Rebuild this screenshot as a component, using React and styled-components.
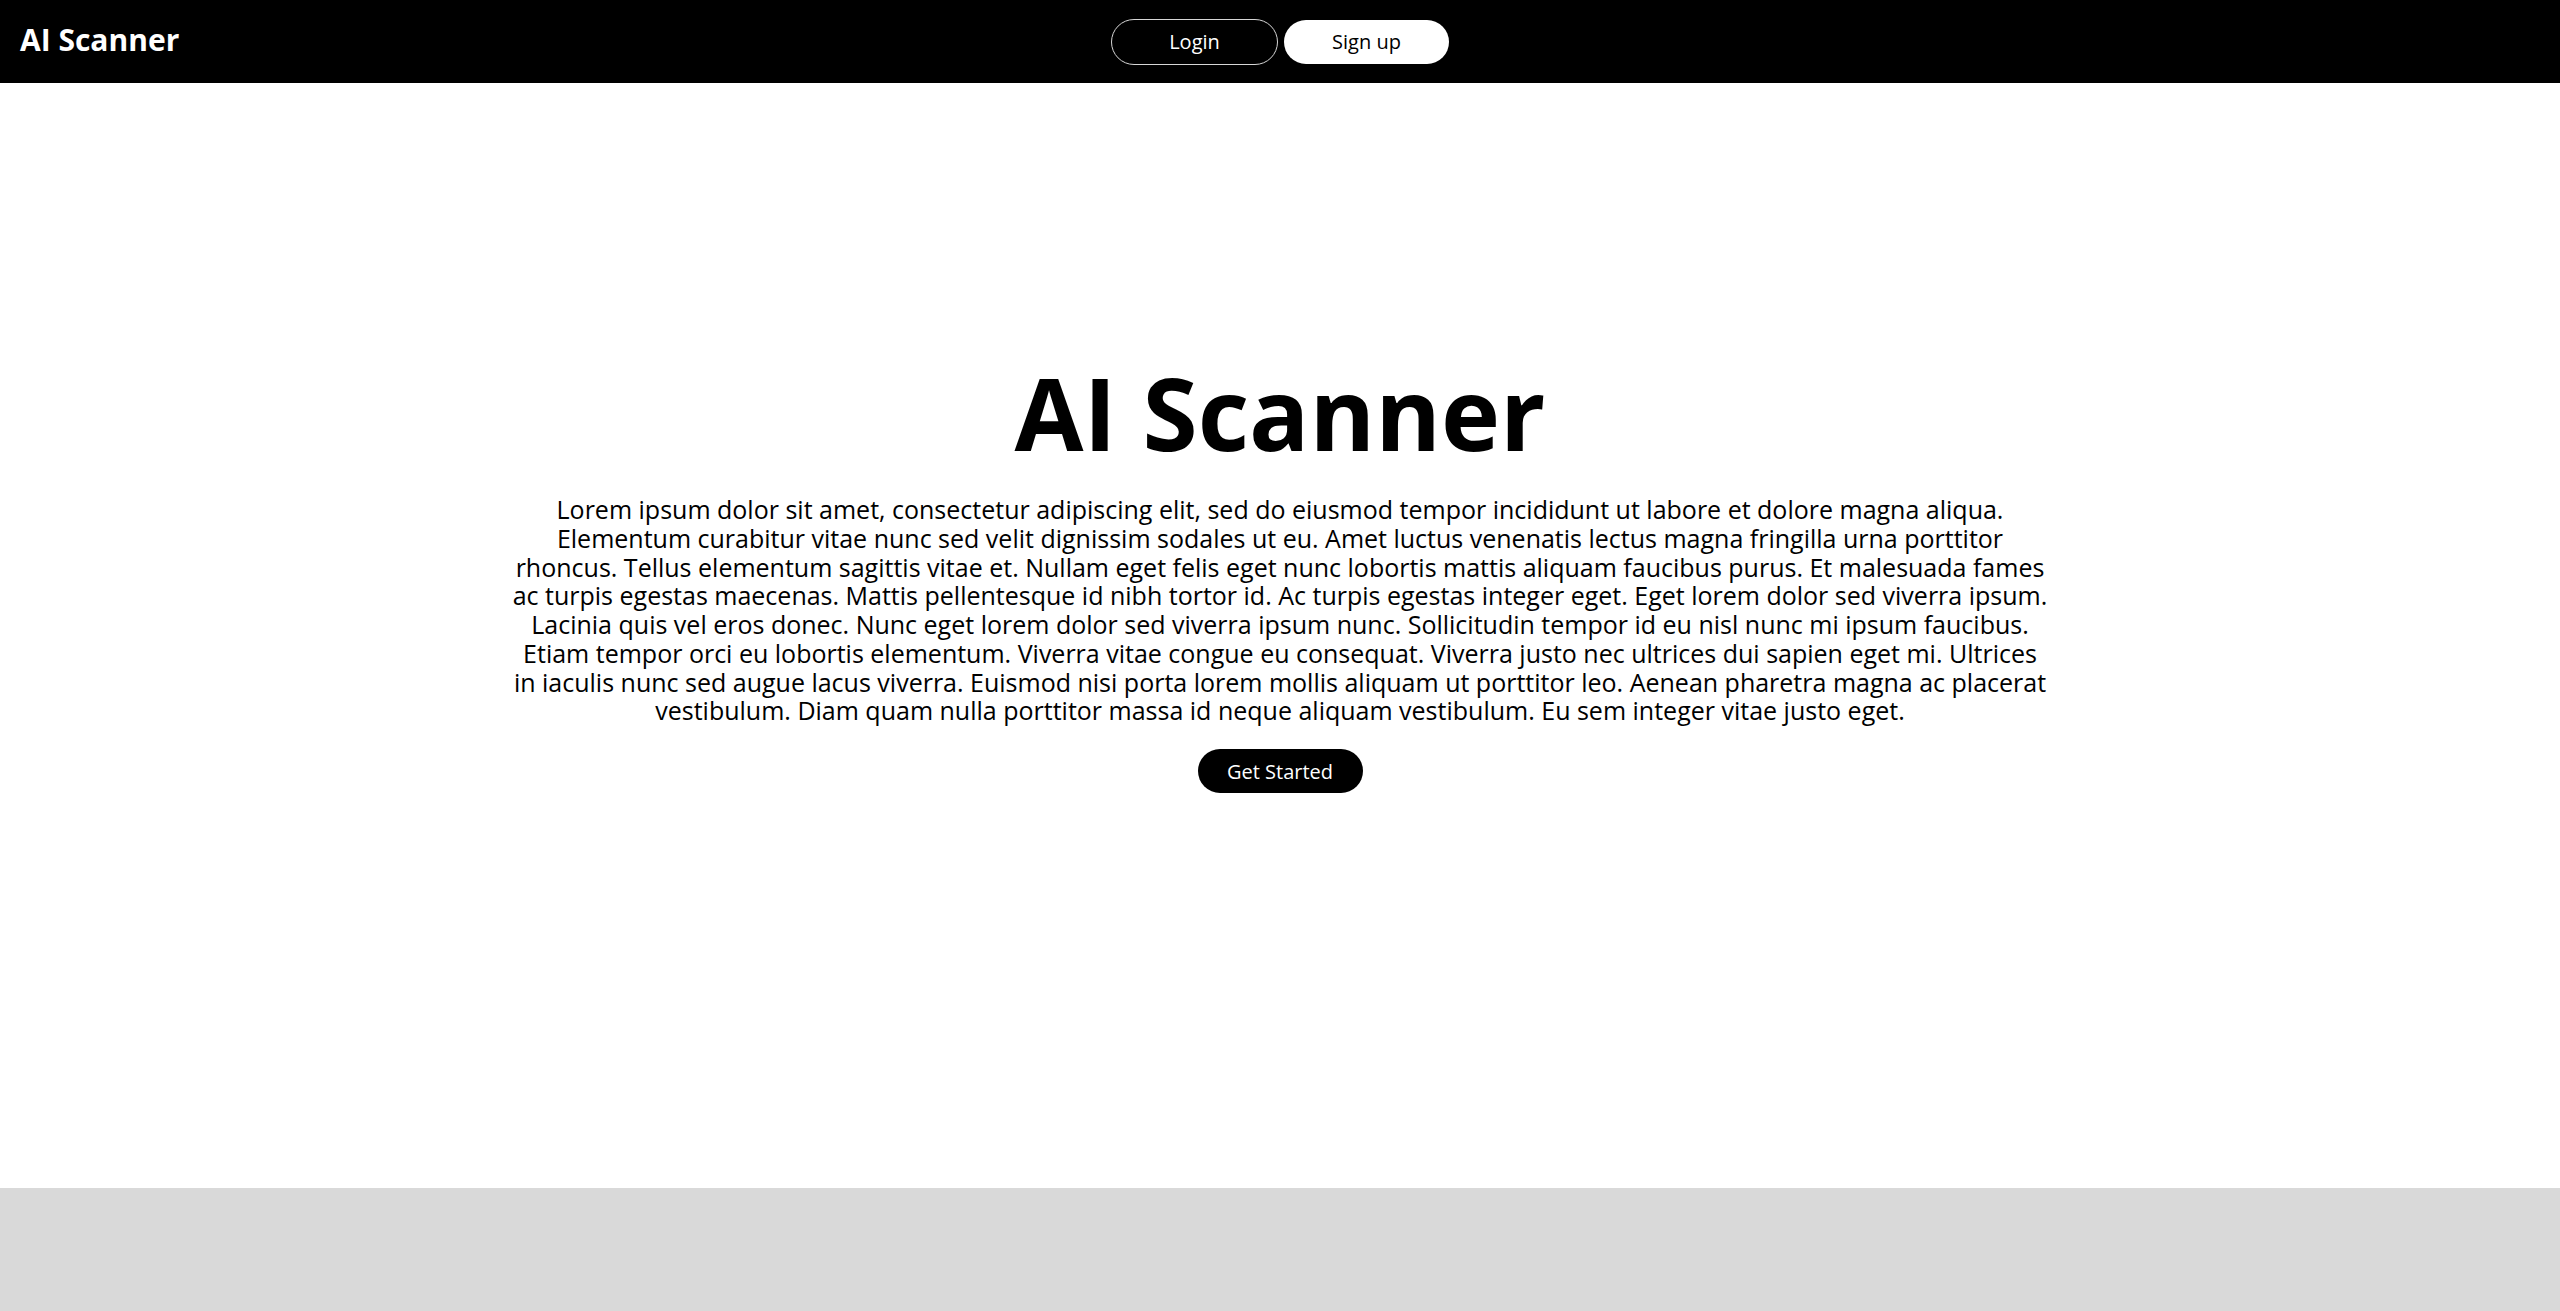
import React from "react";
import styled, { createGlobalStyle } from "styled-components";

const GlobalStyle = createGlobalStyle`
  * {
    box-sizing: border-box;
  }
  body {
    margin: 0;
    font-family: "Open Sans", "Noto Sans", sans-serif;
    background-color: #ffffff;
    color: #000000;
  }
`;

const LOREM =
  "Lorem ipsum dolor sit amet, consectetur adipiscing elit, sed do eiusmod tempor incididunt ut labore et dolore magna aliqua. Elementum curabitur vitae nunc sed velit dignissim sodales ut eu. Amet luctus venenatis lectus magna fringilla urna porttitor rhoncus. Tellus elementum sagittis vitae et. Nullam eget felis eget nunc lobortis mattis aliquam faucibus purus. Et malesuada fames ac turpis egestas maecenas. Mattis pellentesque id nibh tortor id. Ac turpis egestas integer eget. Eget lorem dolor sed viverra ipsum. Lacinia quis vel eros donec. Nunc eget lorem dolor sed viverra ipsum nunc. Sollicitudin tempor id eu nisl nunc mi ipsum faucibus. Etiam tempor orci eu lobortis elementum. Viverra vitae congue eu consequat. Viverra justo nec ultrices dui sapien eget mi. Ultrices in iaculis nunc sed augue lacus viverra. Euismod nisi porta lorem mollis aliquam ut porttitor leo. Aenean pharetra magna ac placerat vestibulum. Diam quam nulla porttitor massa id neque aliquam vestibulum. Eu sem integer vitae justo eget.";

const App = () => {
  return (
    <>
      <GlobalStyle />
      <Page>
        <Header>
          <Logo>AI Scanner</Logo>
          <AuthBtns>
            <PillBtn variant="outline">Login</PillBtn>
            <PillBtn variant="light">Sign up</PillBtn>
          </AuthBtns>
          <div />
        </Header>
        <Hero>
          <Title>AI Scanner</Title>
          <Intro>{LOREM}</Intro>
          <PillBtn variant="dark">Get Started</PillBtn>
        </Hero>
        <Footer />
      </Page>
    </>
  );
};

const Page = styled.div`
  display: flex;
  flex-direction: column;
  min-height: 100vh;
`;

const Header = styled.header`
  height: 83px;
  background-color: #000000;
  padding: 0 20px;
  display: grid;
  grid-template-columns: 1fr auto 1fr;
  align-items: center;
`;

const Logo = styled.div`
  color: #ffffff;
  font-size: 30px;
  font-weight: 700;
  line-height: 1;
  padding-bottom: 4px;
`;

const AuthBtns = styled.div`
  display: flex;
  align-items: center;
  gap: 6px;
`;

const PillBtn = styled.button`
  width: ${props => (props.variant === "outline" ? "167px" : "165px")};
  height: ${props => (props.variant === "outline" ? "46px" : "44px")};
  border-radius: 23px;
  border: ${props =>
    props.variant === "outline" ? "1px solid #d6d6d6" : "none"};
  background-color: ${props =>
    props.variant === "light" ? "#ffffff" : "#000000"};
  color: ${props => (props.variant === "light" ? "#000000" : "#ffffff")};
  font-family: "Open Sans", sans-serif;
  font-size: 20px;
  font-weight: 400;
  display: flex;
  justify-content: center;
  align-items: center;
  padding: 0;
  cursor: pointer;
`;

const Hero = styled.main`
  height: 1105px;
  padding-top: 261px;
  display: flex;
  flex-direction: column;
  align-items: center;
`;

const Title = styled.h1`
  margin: 0;
  font-size: 100px;
  font-weight: 700;
  line-height: 136px;
`;

const Intro = styled.p`
  width: 1536px;
  margin: 15px 0 24px;
  font-size: 25px;
  line-height: 28.75px;
  text-align: center;
`;

const Footer = styled.footer`
  flex: 1;
  min-height: 123px;
  background-color: #d9d9d9;
`;

export default App;
